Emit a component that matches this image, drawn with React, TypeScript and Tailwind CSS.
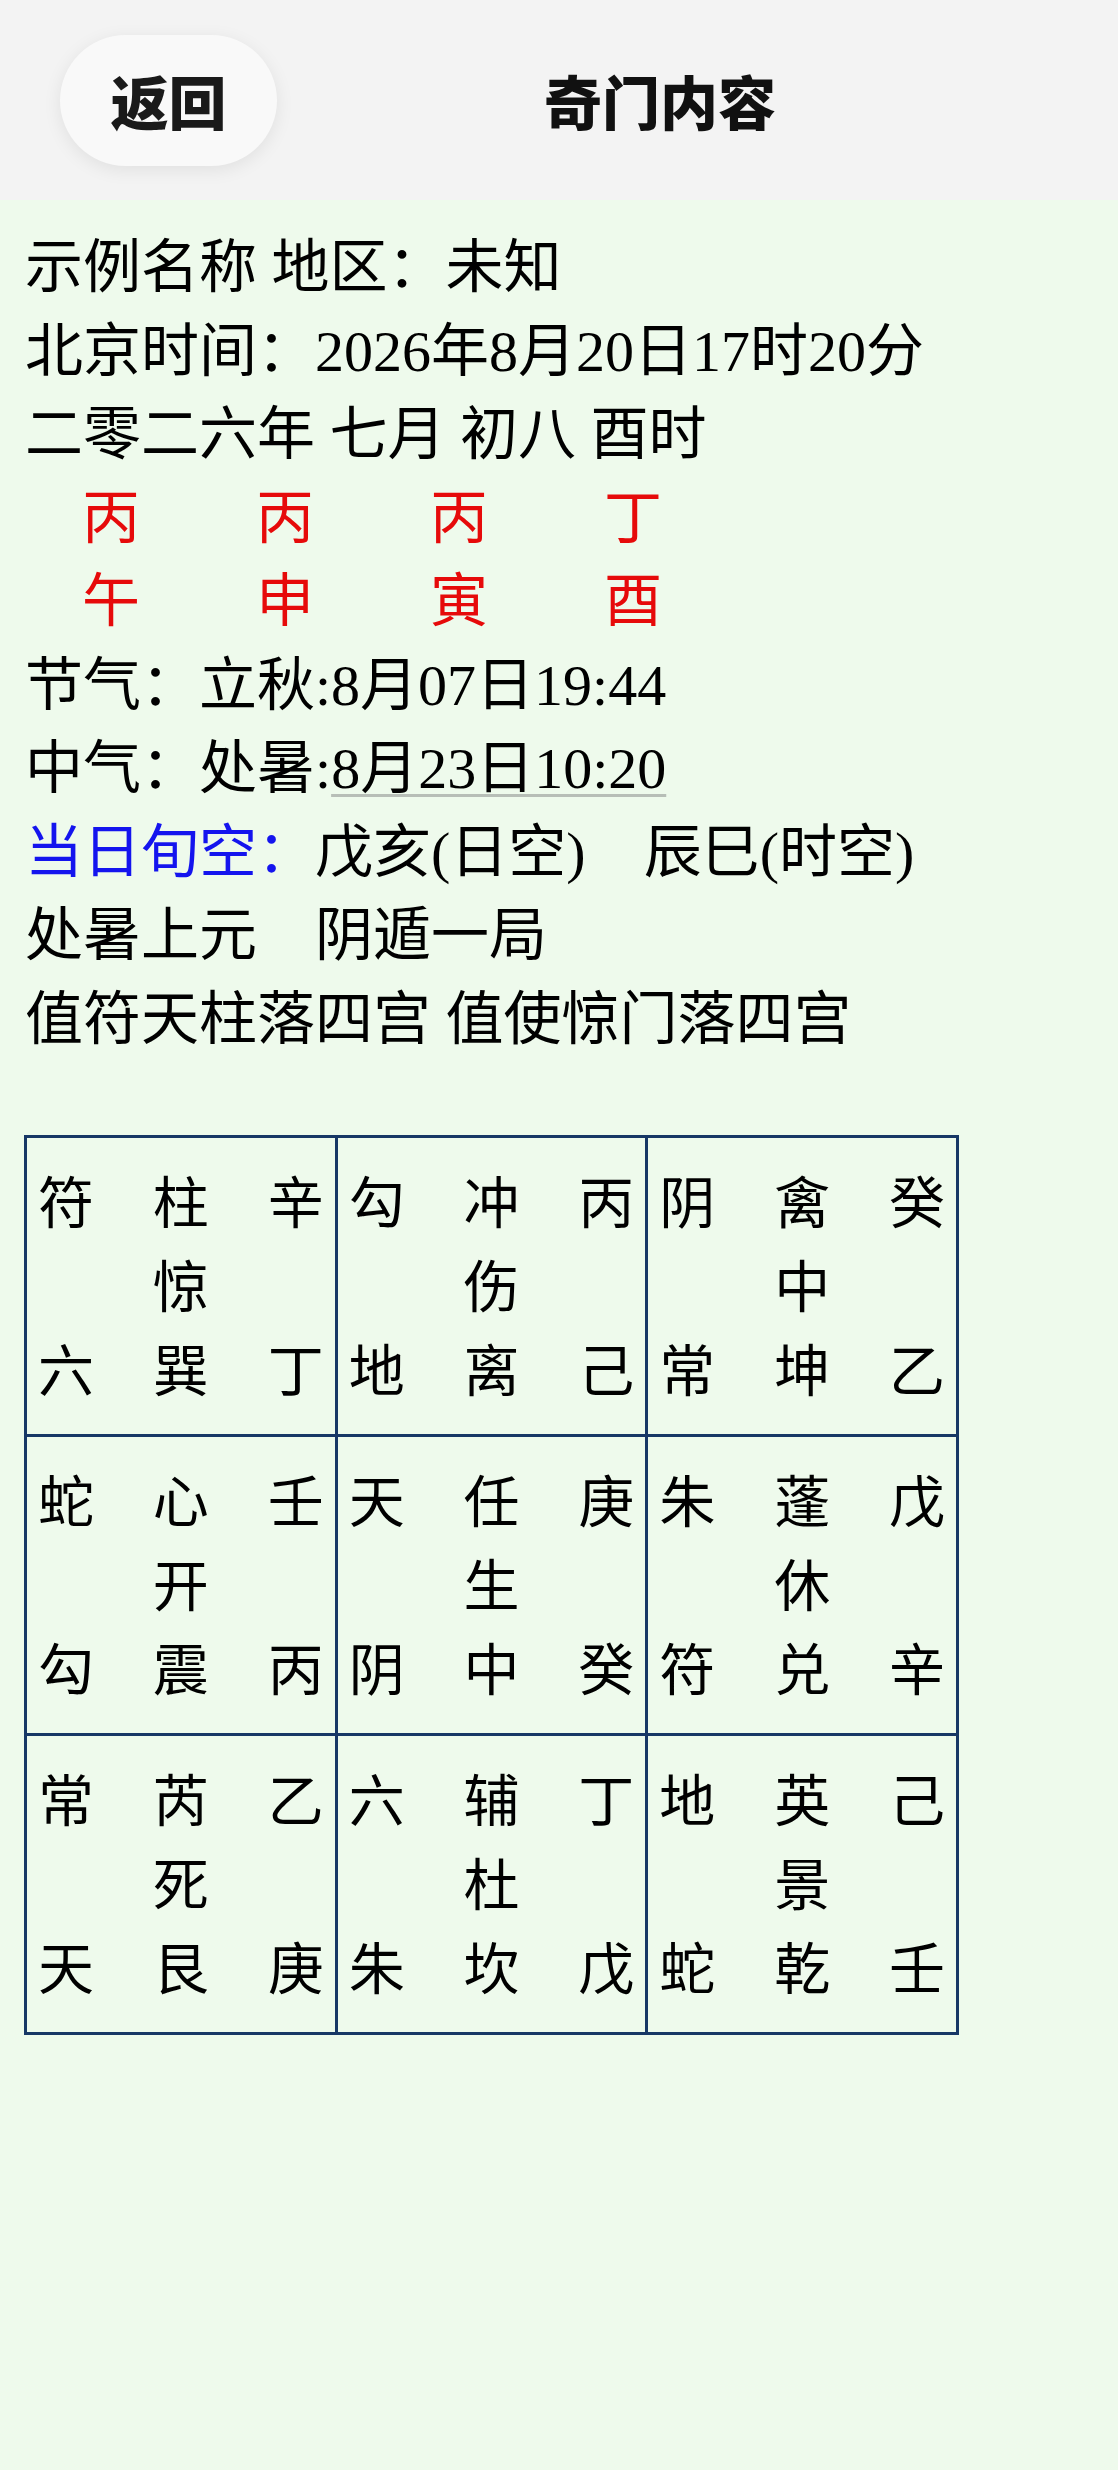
import React from "react";

const cells: string[][][] = [
  [["符", "柱", "辛"], ["", "惊", ""], ["六", "巽", "丁"]],
  [["勾", "冲", "丙"], ["", "伤", ""], ["地", "离", "己"]],
  [["阴", "禽", "癸"], ["", "中", ""], ["常", "坤", "乙"]],
  [["蛇", "心", "壬"], ["", "开", ""], ["勾", "震", "丙"]],
  [["天", "任", "庚"], ["", "生", ""], ["阴", "中", "癸"]],
  [["朱", "蓬", "戊"], ["", "休", ""], ["符", "兑", "辛"]],
  [["常", "芮", "乙"], ["", "死", ""], ["天", "艮", "庚"]],
  [["六", "辅", "丁"], ["", "杜", ""], ["朱", "坎", "戊"]],
  [["地", "英", "己"], ["", "景", ""], ["蛇", "乾", "壬"]],
];

const stems = ["丙", "丙", "丙", "丁"];
const branches = ["午", "申", "寅", "酉"];

export default function App() {
  return (
    <div className="min-h-screen bg-[#eefaec]">
      <div
        className="h-[200px] bg-[#f3f3f3] flex items-center pl-[60px]"
        style={{ fontFamily: '"Noto Sans CJK SC", "Noto Sans", sans-serif' }}
      >
        <div className="w-[217px] h-[131px] rounded-full bg-[#f9f9f9] shadow-[0_4px_18px_rgba(0,0,0,0.08)] flex items-center justify-center text-[58px] font-black text-[#1a1a1a] leading-none">
          返回
        </div>
        <div className="flex-1 mr-[75px] text-center text-[58px] font-black text-[#111] leading-none">
          奇门内容
        </div>
      </div>

      <div
        className="pl-[25px] pt-[26px] text-[58px] leading-[83.5px] text-black"
        style={{ fontFamily: '"Liberation Serif", "Noto Sans CJK SC", serif' }}
      >
        <div>示例名称 地区：未知</div>
        <div>北京时间：2026年8月20日17时20分</div>
        <div>二零二六年 七月 初八 酉时</div>
        <div className="flex text-[#e60a0a]">
          {stems.map((s, i) => (
            <div key={i} className="w-[174px] pl-[57px]">
              {s}
            </div>
          ))}
        </div>
        <div className="flex text-[#e60a0a]">
          {branches.map((s, i) => (
            <div key={i} className="w-[174px] pl-[57px]">
              {s}
            </div>
          ))}
        </div>
        <div>节气：立秋:8月07日19:44</div>
        <div>
          中气：处暑:
          <span className="underline decoration-[#b7beb7] decoration-[3px] underline-offset-[6px]">
            8月23日10:20
          </span>
        </div>
        <div>
          <span className="text-[#1414ee]">当日旬空：</span>戊亥(日空)　辰巳(时空)
        </div>
        <div>处暑上元　阴遁一局</div>
        <div>值符天柱落四宫 值使惊门落四宫</div>
      </div>

      <div className="pl-[24px] mt-[74px]">
        <div
          className="w-[935px] grid grid-cols-3 gap-[3px] p-[3px] bg-[#173766]"
          style={{ fontFamily: '"Noto Sans CJK SC", "Noto Sans", sans-serif' }}
        >
          {cells.map((cell, ci) => (
            <div
              key={ci}
              className="bg-[#eefaec] h-[296px] pt-[19px] px-[11px] text-[56px] leading-[84px] text-black"
            >
              {cell.map((row, ri) => (
                <div key={ri} className="grid grid-cols-3 h-[84px]">
                  <div className="text-left">{row[0]}</div>
                  <div className="text-center">{row[1]}</div>
                  <div className="text-right">{row[2]}</div>
                </div>
              ))}
            </div>
          ))}
        </div>
      </div>
    </div>
  );
}
